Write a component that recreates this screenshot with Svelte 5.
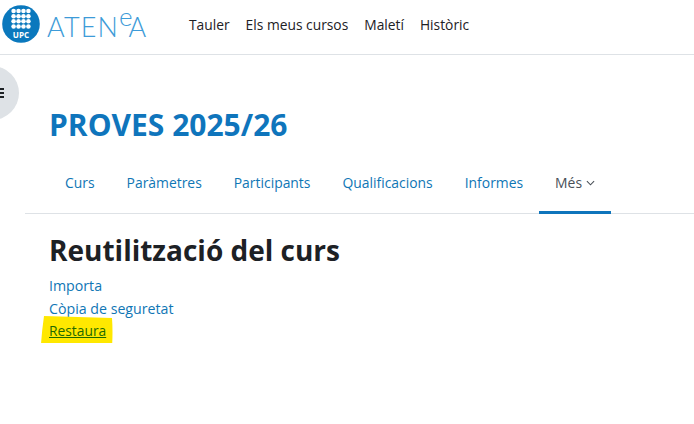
<script lang="ts">
  const navItems = ["Tauler", "Els meus cursos", "Maletí", "Històric"];
  const tabs = ["Curs", "Paràmetres", "Participants", "Qualificacions", "Informes"];
</script>

<header class="topbar">
  <a class="brand" href="#top">
    <svg class="upc" viewBox="0 0 40 40" width="38" height="38" aria-hidden="true">
      <circle cx="20" cy="20" r="19.8" fill="#0a78bd" />
      {#each [0, 1, 2, 3] as row}
        {#each [0, 1, 2, 3] as col}
          <circle cx={12.2 + col * 5.2} cy={6.4 + row * 5.4} r="2.4" fill="#fff" />
        {/each}
      {/each}
      <text x="20" y="34.5" text-anchor="middle" class="upc-text">UPC</text>
    </svg>
    <span class="atenea">ATEN<span class="raised">e</span>A</span>
  </a>
  <nav class="mainnav">
    {#each navItems as item}
      <a href="#top">{item}</a>
    {/each}
  </nav>
</header>

<button class="drawer-toggle" aria-label="Obre l'índex">
  <span></span><span></span><span></span>
</button>

<main class="page">
  <h1>PROVES 2025/26</h1>
  <nav class="tabs">
    {#each tabs as tab}
      <a href="#top">{tab}</a>
    {/each}
    <a class="active" href="#top">
      Més
      <svg viewBox="0 0 10 6" width="9" height="6" aria-hidden="true">
        <path d="M1 1l4 4 4-4" fill="none" stroke="currentColor" stroke-width="1.2" />
      </svg>
    </a>
  </nav>
  <section class="content">
    <h2>Reutilització del curs</h2>
    <ul>
      <li><a href="#top">Importa</a></li>
      <li><a href="#top">Còpia de seguretat</a></li>
      <li>
        <span class="marked">
          <svg class="marker" viewBox="0 0 72 32" width="72" height="32" aria-hidden="true">
            <path d="M3 0L71 2Q72 16 71 31L45 29.5L0 28Q1 14 3 0Z" fill="#ffe800" />
          </svg>
          <a class="restore" href="#top">Restaura</a>
        </span>
      </li>
    </ul>
  </section>
</main>

<style>
  :global(body) {
    background: #fff;
    font-family: "Open Sans", "Noto Sans", sans-serif;
    overflow: hidden;
  }

  a {
    text-decoration: none;
  }

  .topbar {
    display: flex;
    align-items: center;
    height: 54px;
    border-bottom: 1px solid #dee2e6;
  }

  .brand {
    display: flex;
    align-items: center;
    width: 181px;
    margin-bottom: 6px;
    padding-left: 2px;
    flex: none;
    box-sizing: border-box;
  }

  .upc-text {
    font: 700 8.5px "Open Sans", sans-serif;
    fill: #fff;
  }

  .atenea {
    margin-left: 7px;
    margin-top: 4px;
    font: 300 27px/1 Lato, sans-serif;
    letter-spacing: 1.1px;
    color: #3d9bd8;
  }

  .raised {
    position: relative;
    top: -11px;
    font-size: 26px;
    letter-spacing: -4px;
  }

  .mainnav {
    display: flex;
    gap: 16px;
    margin-left: 8px;
    margin-bottom: 6px;
    font-size: 13.8px;
  }

  .mainnav a {
    color: #1d2125;
  }

  .drawer-toggle {
    position: absolute;
    left: -35px;
    top: 66px;
    width: 54px;
    height: 54px;
    padding: 0 15px 0 0;
    border: none;
    border-radius: 50%;
    background: #dee2e6;
    display: flex;
    flex-direction: column;
    align-items: flex-end;
    justify-content: center;
    gap: 2px;
    box-sizing: border-box;
  }

  .drawer-toggle span {
    width: 5px;
    height: 2px;
    background: #1d2125;
  }

  .page {
    padding: 50px 0 0 25px;
  }

  h1 {
    margin: 0 0 0 24px;
    font-size: 30px;
    line-height: 40px;
    font-weight: 700;
    color: #0f75bc;
  }

  .tabs {
    display: flex;
    margin-top: 9px;
    height: 60px;
    padding: 0 0 0 24px;
    box-sizing: border-box;
    border-bottom: 1px solid #dee2e6;
    font-size: 13.9px;
  }

  .tabs a {
    display: flex;
    align-items: center;
    gap: 4px;
    margin-bottom: -1px;
    padding: 0 16px;
    color: #0f76b5;
    border-bottom: 3px solid transparent;
  }

  .tabs a.active {
    color: #495057;
    border-bottom-color: #0f75bc;
  }

  .content {
    padding: 18px 0 0 24px;
  }

  h2 {
    margin: 0 0 7px;
    font-size: 28px;
    line-height: 36px;
    font-weight: 700;
    color: #1d2125;
  }

  ul {
    list-style: none;
    margin: 0;
    padding: 0;
    font-size: 14.2px;
    line-height: 22.5px;
  }

  li a {
    color: #0f76b5;
  }

  .marked {
    position: relative;
    display: inline-block;
  }

  .marker {
    position: absolute;
    left: -8px;
    top: -4px;
  }

  .restore {
    position: relative;
    color: #1f6a00;
    font-size: 13.8px;
    text-decoration: underline;
  }
</style>
